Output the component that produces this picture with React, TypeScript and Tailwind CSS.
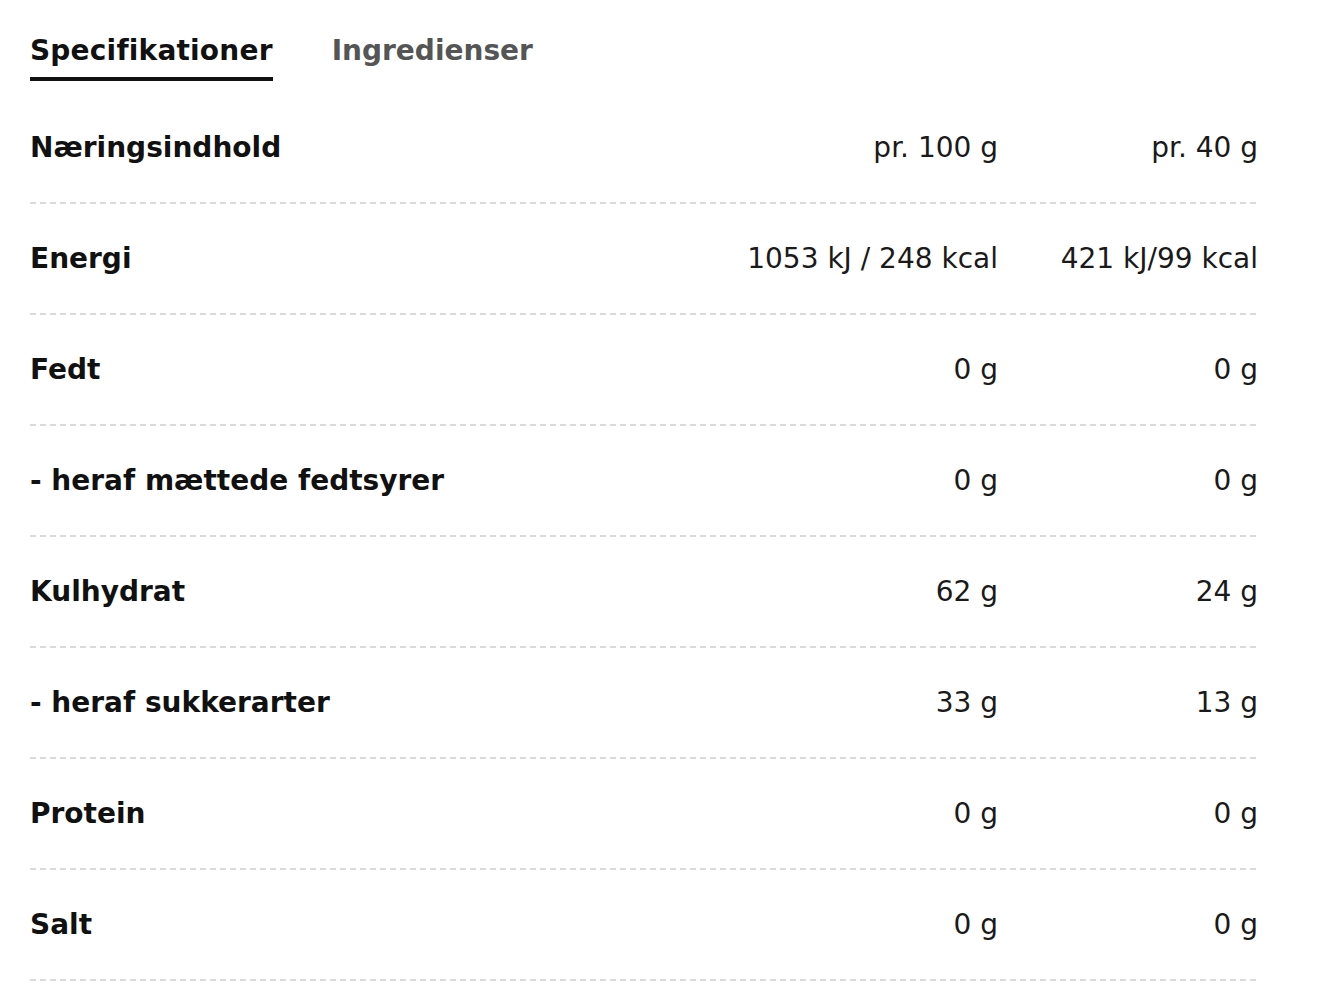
const rows = [
  { label: "Næringsindhold", a: "pr. 100 g", b: "pr. 40 g" },
  { label: "Energi", a: "1053 kJ / 248 kcal", b: "421 kJ/99 kcal" },
  { label: "Fedt", a: "0 g", b: "0 g" },
  { label: "- heraf mættede fedtsyrer", a: "0 g", b: "0 g" },
  { label: "Kulhydrat", a: "62 g", b: "24 g" },
  { label: "- heraf sukkerarter", a: "33 g", b: "13 g" },
  { label: "Protein", a: "0 g", b: "0 g" },
  { label: "Salt", a: "0 g", b: "0 g" },
];

function Tabs() {
  return (
    <div className="flex gap-[59px] h-[93px] pt-[34px]">
      <div className="flex flex-col">
        <span className="text-[28px] leading-[34px] font-bold tracking-[0.2px] text-[#111]">Specifikationer</span>
        <div className="mt-[9px] h-[4px] bg-[#111]" />
      </div>
      <span className="text-[28px] leading-[34px] font-bold text-[#555]">Ingredienser</span>
    </div>
  );
}

function Row({ label, a, b }: { label: string; a: string; b: string }) {
  return (
    <div>
      <div className="grid grid-cols-[1fr_260px_260px] items-center h-[109px] text-[28px] text-[#1a1a1a]">
        <span className="font-bold text-[#111]">{label}</span>
        <span className="text-right">{a}</span>
        <span className="text-right">{b}</span>
      </div>
      <div className="h-[2px] bg-[repeating-linear-gradient(to_right,#dadada_0_6px,transparent_6px_10px)]" />
    </div>
  );
}

export default function App() {
  return (
    <div className="bg-white min-h-screen px-[30px] w-[1288px] font-['DejaVu_Sans',sans-serif]">
      <Tabs />
      {rows.map((r) => (
        <Row key={r.label} {...r} />
      ))}
    </div>
  );
}
